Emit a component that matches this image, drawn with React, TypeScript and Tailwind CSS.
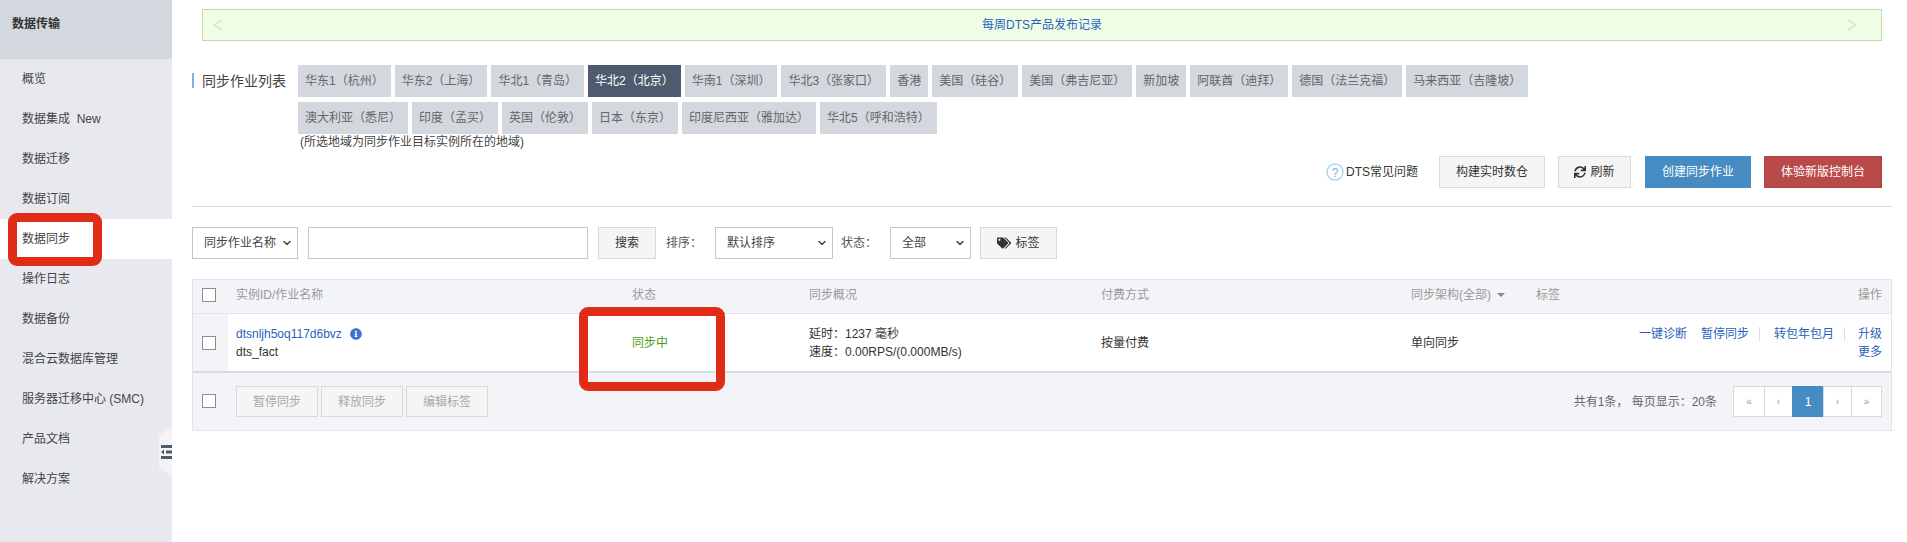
import { ChevronDown } from "lucide-react";
import { FaInfoCircle, FaSync, FaTags } from "react-icons/fa";

const menu = ["概览", "数据集成  New", "数据迁移", "数据订阅", "数据同步", "操作日志", "数据备份", "混合云数据库管理", "服务器迁移中心 (SMC)", "产品文档", "解决方案"];

const regionRows = [
  ["华东1（杭州）", "华东2（上海）", "华北1（青岛）", "华北2（北京）", "华南1（深圳）", "华北3（张家口）", "香港", "美国（硅谷）", "美国（弗吉尼亚）", "新加坡", "阿联酋（迪拜）", "德国（法兰克福）", "马来西亚（吉隆坡）"],
  ["澳大利亚（悉尼）", "印度（孟买）", "英国（伦敦）", "日本（东京）", "印度尼西亚（雅加达）", "华北5（呼和浩特）"],
];

const pages = [
  { label: "«", className: "w-[32px] bg-white border-[#d9d9d9] text-[10px] text-[#999]" },
  { label: "‹", className: "w-[29px] bg-white border-[#d9d9d9] text-[10px] text-[#999]" },
  { label: "1", className: "w-[32px] bg-[#468cc2] border-[#468cc2] text-white text-xs" },
  { label: "›", className: "w-[29px] bg-white border-[#d9d9d9] text-[10px] text-[#999]" },
  { label: "»", className: "w-[31px] bg-white border-[#d9d9d9] text-[10px] text-[#999]" },
];

const Checkbox = () => <span className="block w-[14px] h-[14px] border border-[#8e8e8e] bg-white" />;

const Select = ({ label, width }: { label: string; width: string }) => (
  <div className={`relative h-8 ${width}`}>
    <select className="w-full h-full appearance-none border border-[#c4c6cf] bg-white pl-[11px] text-xs text-[#444] outline-none">
      <option>{label}</option>
    </select>
    <ChevronDown size={12} strokeWidth={3} className="absolute right-[5px] top-[10px] text-[#444] pointer-events-none" />
  </div>
);

const FootButton = ({ label }: { label: string }) => (
  <button className="h-[31px] w-[82px] border border-[#d9d9d9] bg-[#f5f5f5] text-xs text-[#a9a9a9]">{label}</button>
);

const Separator = () => <span className="w-px h-[14px] bg-[#dddddd]" />;

const App = () => {
  return (
    <div className="relative flex w-[1907px] h-[542px] overflow-hidden bg-white text-xs text-[#333] font-['Liberation_Sans','Noto_Sans_CJK_SC',sans-serif]">
      <aside className="relative w-[172px] shrink-0 bg-[#e8e9ee]">
        <div className="h-[59px] bg-[#d3d7de] pl-3 pt-4 font-bold text-[#333] leading-[16px]">数据传输</div>
        <ul>
          {menu.map((item) => (
            <li
              key={item}
              className={`h-10 pl-[22px] leading-10 whitespace-pre text-[#444] ${item === "数据同步" ? "bg-white" : ""}`}
            >
              {item}
            </li>
          ))}
        </ul>
        {/* collapse handle */}
        <div className="absolute right-0 top-[427px] w-[13px] h-[50px] bg-[#f4f4f6] [clip-path:polygon(100%_0,0_16%,0_80%,100%_100%)]">
          <svg width="11" height="14" viewBox="0 0 11 14" fill="#4e5a6e" className="absolute left-[2px] top-[18px]">
            <rect x="0" y="0" width="11" height="3" />
            <rect x="5" y="5.5" width="6" height="3" />
            <path d="M3 4.5v5L0 7z" />
            <rect x="0" y="11" width="11" height="3" />
          </svg>
        </div>
      </aside>

      <main className="flex-1 min-w-0 pl-5 pr-[15px] pt-[9px]">
        <div className="mx-[10px] h-8 flex items-center justify-between border border-[#c5d8ab] bg-[#f0fde6] px-[10px] text-[#2b5fbd]">
          <svg width="10" height="12" viewBox="0 0 10 12" fill="none" stroke="#d5dccd" strokeWidth="1.2" className="mr-[14px]"><path d="M9 1 1 6l8 5" /></svg>
          <span>每周DTS产品发布记录</span>
          <svg width="10" height="12" viewBox="0 0 10 12" fill="none" stroke="#d5dccd" strokeWidth="1.2" className="mr-[14px]"><path d="m1 1 8 5-8 5" /></svg>
        </div>

        <div className="mt-6 flex">
          <div className="w-[106px] shrink-0 flex items-start pt-2">
            <span className="w-[2px] h-[15px] bg-[#8aaedb] mr-2" />
            <span className="text-sm leading-[16px] text-[#444]">同步作业列表</span>
          </div>
          <div>
            <div className="flex flex-col gap-[5px]">
              {regionRows.map((row, i) => (
                <div key={i} className="flex gap-1">
                  {row.map((region) => (
                    <span
                      key={region}
                      className={`h-8 px-[7px] leading-8 whitespace-nowrap ${region === "华北2（北京）" ? "bg-[#4e5a6e] text-white" : "bg-[#d3d7de] text-[#666]"}`}
                    >
                      {region}
                    </span>
                  ))}
                </div>
              ))}
            </div>
            <p className="ml-[2px] leading-[16px] text-[#444]">(所选地域为同步作业目标实例所在的地域)</p>
          </div>
        </div>

        <div className="mt-[6px] pr-[10px] flex items-center justify-end">
          <svg width="18" height="18" viewBox="0 0 18 18" className="mr-[2px]">
            <circle cx="9" cy="9" r="8" fill="none" stroke="#a8d8ef" strokeWidth="1.5" />
            <text x="9" y="13.5" textAnchor="middle" fontSize="12" fill="#6bb8e0">?</text>
          </svg>
          <span className="mr-[21px]">DTS常见问题</span>
          <button className="h-8 w-[106px] border border-[#d9d9d9] bg-[#f5f5f5] mr-[13px]">构建实时数仓</button>
          <button className="h-8 w-[73px] border border-[#d9d9d9] bg-[#f5f5f5] mr-[14px] flex items-center justify-center gap-1">
            <FaSync size={12} />刷新
          </button>
          <button className="h-8 w-[106px] bg-[#468cc2] text-white mr-[13px]">创建同步作业</button>
          <button className="h-8 w-[118px] border border-[#b33f3f] bg-[#b94a4a] text-white">体验新版控制台</button>
        </div>

        <hr className="mt-[18px] border-0 h-px bg-[#d9d9d9]" />

        <div className="mt-5 flex items-center">
          <Select label="同步作业名称" width="w-[106px]" />
          <input className="ml-[10px] w-[280px] h-8 border border-[#c4c6cf] bg-white" />
          <button className="ml-[10px] h-8 w-[58px] border border-[#d9d9d9] bg-[#f5f5f5]">搜索</button>
          <span className="ml-[10px] w-[49px] text-[#555]">排序：</span>
          <Select label="默认排序" width="w-[118px]" />
          <span className="ml-2 w-[49px] text-[#555]">状态：</span>
          <Select label="全部" width="w-[81px]" />
          <button className="ml-[9px] h-8 w-[77px] border border-[#d9d9d9] bg-[#f5f5f5] flex items-center justify-center gap-1">
            <FaTags size={14} />标签
          </button>
        </div>

        <div className="mt-5 border border-[#e1e4eb]">
          <div className="grid grid-cols-[35px_396px_177px_292px_310px_125px_102px_1fr] h-[34px] pb-[3px] items-center bg-[#f3f4f8] border-b border-[#e1e4eb] text-[#999]">
            <div className="pl-[9px]"><Checkbox /></div>
            <div className="pl-2">实例ID/作业名称</div>
            <div className="pl-2">状态</div>
            <div className="pl-2">同步概况</div>
            <div className="pl-2">付费方式</div>
            <div className="pl-2 flex items-center gap-[6px]">同步架构(全部)<span className="w-0 h-0 border-x-4 border-x-transparent border-t-4 border-t-[#888]" /></div>
            <div className="pl-2">标签</div>
            <div className="pr-[9px] text-right">操作</div>
          </div>

          <div className="grid grid-cols-[35px_396px_177px_292px_310px_125px_102px_1fr] h-[57px] items-center leading-[18px]">
            <div className="pl-[9px] h-full flex items-center bg-[#f3f4f8]"><Checkbox /></div>
            <div className="pl-2">
              <div className="flex items-center gap-2">
                <span className="text-[#2b5fbd]">dtsnljh5oq117d6bvz</span>
                <FaInfoCircle size={12} className="text-[#3d74cf]" />
              </div>
              <div>dts_fact</div>
            </div>
            <div className="pl-2 text-[#4f9a1e]">同步中</div>
            <div className="pl-2">
              <div>延时：1237 毫秒</div>
              <div>速度：0.00RPS/(0.000MB/s)</div>
            </div>
            <div className="pl-2">按量付费</div>
            <div className="pl-2">单向同步</div>
            <div />
            <div className="pr-[9px] text-[#2b5fbd]">
              <div className="flex items-center justify-end">
                <span>一键诊断</span>
                <span className="ml-[14px] mr-[10px]">暂停同步</span>
                <Separator />
                <span className="ml-[14px] mr-[10px]">转包年包月</span>
                <Separator />
                <span className="ml-[13px]">升级</span>
              </div>
              <div className="text-right">更多</div>
            </div>
          </div>

          <div className="flex h-[59px] items-center justify-between border-t-2 border-[#d9dbe2] bg-[#f3f4f8] pl-[9px] pr-[9px]">
            <div className="flex items-center">
              <span className="-mt-[2px]"><Checkbox /></span>
              <div className="ml-[20px] flex gap-[3px]">
                <FootButton label="暂停同步" />
                <FootButton label="释放同步" />
                <FootButton label="编辑标签" />
              </div>
            </div>
            <div className="flex items-center gap-4">
              <span className="text-[#666]">共有1条， 每页显示：20条</span>
              <div className="flex h-[31px]">
                {pages.map((page) => (
                  <span key={page.label} className={`flex items-center justify-center border -ml-px first:ml-0 ${page.className}`}>
                    {page.label}
                  </span>
                ))}
              </div>
            </div>
          </div>
        </div>
      </main>

      {/* red annotation boxes drawn over the screenshot */}
      <div className="absolute left-2 top-[213px] w-[94px] h-[53px] border-[9px] border-[#e02b16] rounded-[9px]" />
      <div className="absolute left-[579px] top-[307px] w-[146px] h-[84px] border-[9px] border-[#e02b16] rounded-[9px]" />
    </div>
  );
};

export default App;
